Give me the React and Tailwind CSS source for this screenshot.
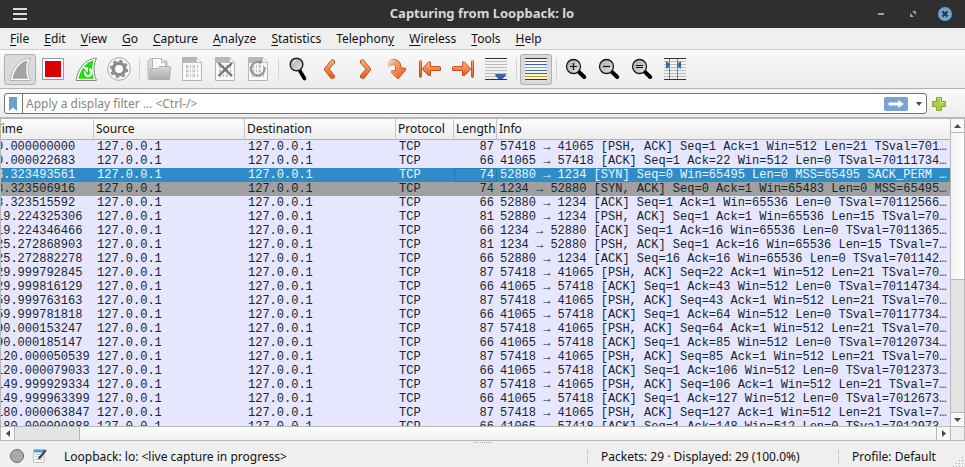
import React from "react";

const packets = [
  ["0.000000000", 87, "57418 → 41065 [PSH, ACK] Seq=1 Ack=1 Win=512 Len=21 TSval=701…"],
  ["0.000022683", 66, "41065 → 57418 [ACK] Seq=1 Ack=22 Win=512 Len=0 TSval=70111734…"],
  ["3.323493561", 74, "52880 → 1234 [SYN] Seq=0 Win=65495 Len=0 MSS=65495 SACK_PERM …", "selected"],
  ["3.323506916", 74, "1234 → 52880 [SYN, ACK] Seq=0 Ack=1 Win=65483 Len=0 MSS=65495…", "syn"],
  ["3.323515592", 66, "52880 → 1234 [ACK] Seq=1 Ack=1 Win=65536 Len=0 TSval=70112566…"],
  ["19.224325306", 81, "52880 → 1234 [PSH, ACK] Seq=1 Ack=1 Win=65536 Len=15 TSval=70…"],
  ["19.224346466", 66, "1234 → 52880 [ACK] Seq=1 Ack=16 Win=65536 Len=0 TSval=7011365…"],
  ["25.272868903", 81, "1234 → 52880 [PSH, ACK] Seq=1 Ack=16 Win=65536 Len=15 TSval=7…"],
  ["25.272882278", 66, "52880 → 1234 [ACK] Seq=16 Ack=16 Win=65536 Len=0 TSval=701142…"],
  ["29.999792845", 87, "57418 → 41065 [PSH, ACK] Seq=22 Ack=1 Win=512 Len=21 TSval=70…"],
  ["29.999816129", 66, "41065 → 57418 [ACK] Seq=1 Ack=43 Win=512 Len=0 TSval=70114734…"],
  ["59.999763163", 87, "57418 → 41065 [PSH, ACK] Seq=43 Ack=1 Win=512 Len=21 TSval=70…"],
  ["59.999781818", 66, "41065 → 57418 [ACK] Seq=1 Ack=64 Win=512 Len=0 TSval=70117734…"],
  ["90.000153247", 87, "57418 → 41065 [PSH, ACK] Seq=64 Ack=1 Win=512 Len=21 TSval=70…"],
  ["90.000185147", 66, "41065 → 57418 [ACK] Seq=1 Ack=85 Win=512 Len=0 TSval=70120734…"],
  ["120.000050539", 87, "57418 → 41065 [PSH, ACK] Seq=85 Ack=1 Win=512 Len=21 TSval=70…"],
  ["120.000079033", 66, "41065 → 57418 [ACK] Seq=1 Ack=106 Win=512 Len=0 TSval=7012373…"],
  ["149.999929334", 87, "57418 → 41065 [PSH, ACK] Seq=106 Ack=1 Win=512 Len=21 TSval=7…"],
  ["149.999963399", 66, "41065 → 57418 [ACK] Seq=1 Ack=127 Win=512 Len=0 TSval=7012673…"],
  ["180.000063847", 87, "57418 → 41065 [PSH, ACK] Seq=127 Ack=1 Win=512 Len=21 TSval=7…"],
  ["180.000090888", 66, "41065 → 57418 [ACK] Seq=1 Ack=148 Win=512 Len=0 TSval=7012973…"],
];

const rowTone = {
  selected: "bg-[#308cc6] text-[#eaf5fc]",
  syn: "bg-[#a0a0a0] text-[#12272e]",
  normal: "bg-[#e7e6ff] text-[#12272e]",
};

const menus = [
  ["", "F", "ile"], ["", "E", "dit"], ["", "V", "iew"], ["", "G", "o"], ["", "C", "apture"],
  ["", "A", "nalyze"], ["", "S", "tatistics"], ["Telephon", "y", ""], ["", "W", "ireless"],
  ["", "T", "ools"], ["", "H", "elp"],
];

const FIN = "M6 26.5C8 14.500 15 5 26.500 4C23 12 23.500 19 26.500 26.500Z";

function Fin({ color, edge }) {
  return (
    <>
      <path d={FIN} fill="#fff" stroke={edge} strokeWidth="1" />
      <path d="M8.300 24.700C10.500 15.500 16 8 23.700 6.200C21.500 13 22 19 23.900 24.700Z" fill={color} />
    </>
  );
}

function Page() {
  return (
    <>
      <path d="M6.500 3.500H20.500L25.500 8.500V26.500H6.500Z" fill="#fafafa" stroke="#b4b4b4" />
      <path d="M7 4H20V9H7Z" fill="#b8b8b8" />
      <path d="M20.500 3.500V8.500H25.500Z" fill="#fff" stroke="#bdbdbd" />
      {[12.5, 17, 21.5].map((y) => (
        <g key={y} stroke="#bcbcbc" fill="none">
          <rect x="10.500" y={y - 1} width="1.500" height="2" />
          <path d={`M14.500 ${y - 1.5}v3M21.500 ${y - 1.5}v3`} />
          <rect x="17" y={y - 1} width="1.500" height="2" />
        </g>
      ))}
    </>
  );
}

function Magnifier({ children }) {
  return (
    <>
      <path d="M19 18L24.200 23" stroke="#000" strokeWidth="4" strokeLinecap="round" />
      <circle cx="13.500" cy="12.500" r="7" fill="url(#lens)" stroke="#151515" strokeWidth="1.300" />
      <path d={children} stroke="#111" strokeWidth="1.200" fill="none" />
    </>
  );
}

function Lines({ colors }) {
  return colors.map((c, i) => (
    <path key={i} d={`M5 ${4.5 + i * 3}H27`} stroke={c} strokeWidth="1" />
  ));
}

const orange = { fill: "url(#orange)", stroke: "#c9501f", strokeWidth: 1, strokeLinejoin: "round" };
const G = "#babdb6";
const D = "#2e3436";

const tools = [
  ["Start capture", <Fin color="#a3a3a3" edge="#b4b4b4" />, true],
  ["Stop capture", (
    <>
      <rect x="5.500" y="4.500" width="21" height="21" fill="#fff" stroke="#9a9a9a" />
      <rect x="8" y="7" width="16" height="16" fill="#dc0000" />
    </>
  )],
  ["Restart capture", (
    <>
      <Fin color="#22de0c" edge="#858585" />
      <path d="M14.800 17C14.800 20.500 16 22 18 22C20 22 21.500 20.500 21.300 18.300C21.200 16.500 20.500 15.500 19.500 14.500" fill="none" stroke="#fff" strokeWidth="2" />
      <path d="M12.500 13H18V18.500Z" fill="#fff" />
    </>
  )],
  ["Capture options", (
    <>
      <circle cx="16" cy="15" r="11.300" fill="#fff" stroke="#a5a5a5" strokeWidth="1" />
      <circle cx="16" cy="15" r="8.300" fill="none" stroke="#8b8b8b" strokeWidth="2" strokeDasharray="3.300 3.218" />
      <circle cx="16" cy="15" r="5.800" fill="none" stroke="#8b8b8b" strokeWidth="3.600" />
    </>
  )],
  null,
  ["Open", (
    <>
      <path d="M5 25V7L7 5H13L14 7H24V25Z" fill="#d8d8d8" stroke="#b5b5b5" />
      <path d="M9.500 16V4.500H18.500L22.500 8.500V16Z" fill="#fafafa" stroke="#b5b5b5" />
      <path d="M18.500 4.500V8.500H22.500" fill="none" stroke="#b5b5b5" />
      <path d="M7.500 14.500H15L16.500 12.500H27.500L26.500 25.500H6.500Z" fill="url(#folder)" stroke="#adadad" strokeLinejoin="round" />
    </>
  )],
  ["Save", <Page />],
  ["Close", <><Page /><path d="M9.500 9L23 22M23 9L9.500 22" stroke="#737373" strokeWidth="2.400" /></>],
  ["Reload", (
    <>
      <Page />
      <path d="M18 8.300A6.800 6.800 0 1 0 22.300 13" fill="none" stroke="#969696" strokeWidth="2.300" />
      <path d="M17 5.500L21 7.500L17.500 11Z" fill="#969696" />
    </>
  )],
  null,
  ["Find", (
    <>
      <path d="M18 17L22.500 24.500" stroke="#000" strokeWidth="3.600" strokeLinecap="round" />
      <circle cx="14.500" cy="10.500" r="6.300" fill="url(#lens)" stroke="#222" strokeWidth="1.500" />
      <path d="M11 9.500a4 4 0 0 1 3-3" stroke="#fff" fill="none" />
    </>
  )],
  ["Previous packet", <path {...orange} d="M17 5.500L19.500 6.500V9L14 15L19.500 21.500V23.500L17.500 24.500H16L9.500 16V14.500Z" />],
  ["Next packet", <path {...orange} d="M15 5.500L12.500 6.500V9L18 15L12.500 21.500V23.500L14.500 24.500H16L22.500 16V14.500Z" />],
  ["Go to packet", (
    <>
      <path d="M6.500 11C6.500 7 9.500 5 13 5.500C18 6 20 9 20 14H24Q25.500 14.500 24.500 16L17.500 24.500H16.500L10 18.500Q9.500 16.500 11 16.500H14.500V14C14.500 11 13 10.500 11 11Q9 11.500 7.500 13Z" fill="url(#fade)" stroke="url(#fadeEdge)" strokeLinejoin="round" />
    </>
  )],
  ["First packet", (
    <>
      <rect {...orange} x="5.500" y="6.500" width="2" height="17" rx="1" />
      <path {...orange} d="M8.500 14.500L14.500 8H16.500V12.500H25.500Q26.500 12.500 26.500 13.500V16.500H16.500V21.500H14.500L8.500 15.500Z" />
    </>
  )],
  ["Last packet", (
    <>
      <rect {...orange} x="24.500" y="6.500" width="2" height="17" rx="1" />
      <path {...orange} d="M23.500 14.500L17.500 8H15.500V12.500H6.500Q5.500 12.500 5.500 13.500V16.500H15.500V21.500H17.500L23.500 15.500Z" />
    </>
  )],
  ["Auto scroll", (
    <>
      <Lines colors={[D, G, G, G, G, G, G, D]} />
      <path d="M15 20H26Q26 22 22.500 25H18.500Q15 22 15 20Z" fill="#3465a4" />
    </>
  )],
  null,
  ["Colorize", <><rect x="5" y="4" width="22" height="22" fill="#f7f7f7" /><Lines colors={[D, "#ef2929", "#3465a4", "#73d216", "#3465a4", "#75507b", "#c4a000", D]} /></>, true],
  null,
  ["Zoom in", <Magnifier>M10 12.500h7M13.500 9v7</Magnifier>],
  ["Zoom out", <Magnifier>M10 12.500h7</Magnifier>],
  ["Normal size", <Magnifier>M10 11.500h7M10 13.500h7</Magnifier>],
  ["Resize columns", (
    <>
      <Lines colors={[D, G, G, G, G, G, G, D]} />
      <path d="M10.500 5V25M18.500 5V25" stroke="#777a75" />
      <path d="M7 7.500H8L10.500 10V12L8 14.500H7ZM22 7.500H21L18.500 10V12L21 14.500H22Z" fill="#3465a4" />
    </>
  )],
];

function Toolbar() {
  return (
    <div role="toolbar" className="flex h-[39px] shrink-0 items-center gap-px border-b border-[#b2b2b2] bg-linear-to-b from-[#f9f9f9] to-[#ececec] px-1">
      {tools.map((tool, i) =>
        tool ? (
          <button
            key={i}
            aria-label={tool[0]}
            className={tool[2] ? "h-[31px] w-8 rounded-[3px] bg-[#dadada] outline -outline-offset-1 outline-[#b0b0b0]" : "h-[31px] w-8"}
          >
            <svg viewBox="0 0 32 31" className="block h-[31px] w-8">{tool[1]}</svg>
          </button>
        ) : (
          <div key={i} className="flex w-[6px] justify-center">
            <div className="h-5 w-px bg-[#d2d2d2]" />
          </div>
        )
      )}
    </div>
  );
}

function Gradients() {
  return (
    <svg className="absolute h-0 w-0" aria-hidden="true">
      <defs>
        <linearGradient id="orange" x1="0" y1="0" x2="0" y2="1">
          <stop offset="0" stopColor="#fbb878" />
          <stop offset="1" stopColor="#e95420" />
        </linearGradient>
        <linearGradient id="fade" x1="0" y1="0" x2="1" y2="1">
          <stop offset="0" stopColor="#f5b98a" stopOpacity="0.300" />
          <stop offset="0.300" stopColor="#f6a56a" />
          <stop offset="1" stopColor="#e95420" />
        </linearGradient>
        <linearGradient id="fadeEdge" x1="0" y1="0" x2="1" y2="0">
          <stop offset="0" stopColor="#c9501f" stopOpacity="0" />
          <stop offset="0.500" stopColor="#c9501f" />
        </linearGradient>
        <linearGradient id="folder" x1="0" y1="0" x2="0" y2="1">
          <stop offset="0" stopColor="#d9d9d9" />
          <stop offset="1" stopColor="#a9a9a9" />
        </linearGradient>
        <linearGradient id="lens" x1="0" y1="0" x2="1" y2="1">
          <stop offset="0" stopColor="#a8a8a8" />
          <stop offset="1" stopColor="#e4e4e4" />
        </linearGradient>
      </defs>
    </svg>
  );
}

function TitleBar() {
  return (
    <header className="flex h-7 shrink-0 items-center justify-between bg-[#2f2f2f] pr-1 pl-[13px]">
      <button aria-label="Window menu" className="flex w-[86px] flex-col gap-[3px]">
        <span className="h-[2px] w-[14px] bg-[#dcdcdc]" />
        <span className="h-[2px] w-[14px] bg-[#dcdcdc]" />
        <span className="h-[2px] w-[14px] bg-[#dcdcdc]" />
      </button>
      <h1 className="text-[13px] font-bold text-[#dad6d2]">Capturing from Loopback: lo</h1>
      <div className="flex items-center">
        <button aria-label="Minimize" className="flex w-8 justify-center">
          <svg className="block h-2 w-2"><path d="M1 3h6v2H1z" fill="#a0a0a0" /></svg>
        </button>
        <button aria-label="Restore" className="flex w-8 justify-center">
          <svg className="block h-2 w-2"><path d="M3 1h4v4zM1 3l4 4H1z" fill="#a0a0a0" /></svg>
        </button>
        <button aria-label="Close window" className="flex w-8 justify-center">
          <svg className="block h-[14px] w-[14px]">
            <circle cx="7" cy="7" r="7" fill="#66a8cf" />
            <path d="M4.500 4.500l5 5M9.500 4.500l-5 5" stroke="#2f2f2f" strokeWidth="2" />
          </svg>
        </button>
      </div>
    </header>
  );
}

function FilterBar() {
  return (
    <div className="flex h-7 shrink-0 items-center gap-[5px] bg-linear-to-b from-[#f9f9f9] to-[#ededed] pt-1 pr-[19px] pb-[3px] pl-1">
      <div className="flex h-[21px] min-w-0 flex-1 items-center rounded-[3px] border border-[#747474] bg-white">
        <button aria-label="Bookmarks" className="flex h-full w-[18px] items-center border-r border-[#747474] pl-1">
          <svg className="block h-[14px] w-2"><path d="M0 0h8v14l-4-3.500L0 14z" fill="#6f9ccf" /></svg>
        </button>
        <input
          aria-label="Display filter"
          placeholder="Apply a display filter … <Ctrl-/>"
          className="h-full min-w-0 flex-1 bg-transparent pl-[3px] text-[12px] outline-none placeholder:text-[#858585]"
        />
        <button aria-label="Apply filter" className="mr-2 flex h-[14px] w-6 items-center justify-center rounded-[2px] bg-[#7ba3d3]">
          <svg className="block h-2 w-4"><path d="M0.500 2.500h9.500V0l6 4l-6 4V5.500H0.500z" fill="#fff" /></svg>
        </button>
        <button aria-label="Recent filters" className="mr-1">
          <svg className="block h-1 w-[6px]"><path d="M0 0h6L3 4z" fill="#4a4a4a" /></svg>
        </button>
      </div>
      <button aria-label="Add filter button">
        <svg className="block h-[14px] w-[14px]">
          <path d="M4.500 0.500h5v4h4v5h-4v4h-5v-4h-4v-5h4z" fill="#a9cf45" stroke="#7da828" strokeLinejoin="round" />
          <path d="M5.500 1.500h3v4h4" fill="none" stroke="#d3e793" />
        </svg>
      </button>
    </div>
  );
}

function PacketTable() {
  const head = "border-r border-b border-r-[#c6c6c6] border-b-[#b1b1b1] pl-[2px] text-left align-middle font-normal";
  return (
    <table className="-ml-2 w-[calc(100%+8px)] table-fixed border-separate border-spacing-0 whitespace-nowrap">
      <colgroup>
        <col className="w-[101px]" />
        <col className="w-[151px]" />
        <col className="w-[151px]" />
        <col className="w-[58px]" />
        <col className="w-[43px]" />
        <col />
      </colgroup>
      <thead>
        <tr className="h-[21px] bg-linear-to-b from-[#fcfcfc] to-[#ececec] text-[12px] leading-5 text-[#111]">
          <th className={head}>Time</th>
          <th className={head}>Source</th>
          <th className={head}>Destination</th>
          <th className={head}>Protocol</th>
          <th className={head}>Length</th>
          <th className="border-b border-b-[#b1b1b1] pl-[2px] text-left align-middle font-normal">Info</th>
        </tr>
      </thead>
      <tbody className="font-['Liberation_Mono',monospace] text-[12px] leading-[14px]">
        {packets.map(([time, length, info, tone]) => (
          <tr key={time} className={rowTone[tone || "normal"]}>
            <td className="pl-[3px]">{time}</td>
            <td className="pl-[3px]">127.0.0.1</td>
            <td className="pl-[3px]">127.0.0.1</td>
            <td className="pl-[3px]">TCP</td>
            <td className={tone === "selected" ? "pr-[3px] text-right outline -outline-offset-1 outline-[#2a7cb0]" : "pr-[3px] text-right"}>{length}</td>
            <td className="overflow-hidden pl-[3px]">{info}</td>
          </tr>
        ))}
      </tbody>
    </table>
  );
}

function PacketPane() {
  return (
    <main className="flex min-h-0 flex-1 flex-col border-x border-t-2 border-b border-[#b8b8b8]">
      <div className="flex min-h-0 flex-1">
        <div className="min-w-0 flex-1 overflow-hidden bg-white"><PacketTable /></div>
        <div className="flex w-[14px] flex-col border-l border-[#b8b8b8] bg-[#e4e4e4]">
          <button aria-label="Scroll up" className="flex h-[14px] items-center justify-center border-b border-[#b8b8b8] bg-[#f8f8f8]">
            <svg className="block h-1 w-[7px]"><path d="M0 4h7L3.500 0z" fill="#4a4a4a" /></svg>
          </button>
          <div className="basis-[48%] border-b border-[#b8b8b8] bg-linear-to-r from-[#f3f3f3] to-[#fdfdfd]" />
          <div className="flex-1" />
          <button aria-label="Scroll down" className="flex h-[14px] items-center justify-center border-t border-[#b8b8b8] bg-[#f8f8f8]">
            <svg className="block h-1 w-[7px]"><path d="M0 0h7L3.500 4z" fill="#4a4a4a" /></svg>
          </button>
        </div>
      </div>
      <div className="flex h-[14px] shrink-0 border-t border-[#b8b8b8] bg-[#e4e4e4]">
        <button aria-label="Scroll left" className="flex w-[14px] items-center justify-center border-r border-[#b8b8b8] bg-[#f8f8f8]">
          <svg className="block h-[7px] w-1"><path d="M4 0v7L0 3.500z" fill="#4a4a4a" /></svg>
        </button>
        <div className="w-16" />
        <div className="flex-1 border-x border-[#b8b8b8] bg-linear-to-b from-[#fdfdfd] to-[#f1f1f1]" />
        <button aria-label="Scroll right" className="flex w-[14px] items-center justify-center border-r border-[#b8b8b8] bg-[#f8f8f8]">
          <svg className="block h-[7px] w-1"><path d="M0 0v7l4-3.500z" fill="#4a4a4a" /></svg>
        </button>
        <div className="w-[13px] bg-[#efefef]" />
      </div>
    </main>
  );
}

function StatusBar() {
  return (
    <footer className="shrink-0 bg-[#efefef] text-[12px] leading-[13px] text-[#111]">
      <div className="flex h-1 justify-center">
        <div className="mt-px w-[17px] border-t border-dotted border-[#a8a8a8]" />
      </div>
      <div className="flex h-[22px] items-center pr-[2px] pl-[10px]">
        <button aria-label="Expert information">
          <svg className="block h-[14px] w-[14px]"><circle cx="7" cy="7" r="6.500" fill="#a9aaa5" stroke="#686868" /></svg>
        </button>
        <button aria-label="Capture comments" className="ml-[9px]">
          <svg className="block h-[14px] w-[14px]">
            <path d="M0.500 1h10.500v12.500h-10.500z" fill="#fbfbfb" stroke="#c2c2c2" />
            <path d="M1 0.500h10v3H1z" fill="#4aa0da" />
            <path d="M2 5.500h7M2 8h6M2 10.500h7" stroke="#bcbcbc" />
            <path d="M12.800 1L7 8.500" stroke="#4c4c4c" strokeWidth="2.500" />
            <path d="M6.200 7L8.300 8.800L5 10.500z" fill="#222" />
          </svg>
        </button>
        <span className="ml-[17px] flex-1">Loopback: lo: &lt;live capture in progress&gt;</span>
        <span className="h-[13px] w-[251px] border-l border-dotted border-[#a8a8a8] pl-[13px]">Packets: 29 · Displayed: 29 (100.0%)</span>
        <span className="h-[13px] w-[115px] border-l border-dotted border-[#a8a8a8] pl-[13px]">Profile: Default</span>
        <svg className="block h-[10px] w-[10px] self-end">
          <path d="M9 0v1M6 3.500h1M9 3.500h1M3 6.500h1M6 6.500h1M9 6.500h1M0 9.500h1M3 9.500h1M6 9.500h1M9 9.500h1" stroke="#a8a8a8" />
        </svg>
      </div>
    </footer>
  );
}

export default function App() {
  return (
    <div className="flex h-screen flex-col overflow-hidden bg-[#efefef] font-['Noto_Sans',sans-serif]">
      <Gradients />
      <TitleBar />
      <nav className="flex h-[22px] shrink-0 items-center gap-[15px] border-b border-[#d0d0d0] bg-[#efefef] pl-[10px] text-[12px] text-[#111]">
        {menus.map(([before, key, after]) => (
          <button key={before + key}>
            {before}<span className="underline decoration-1 underline-offset-2">{key}</span>{after}
          </button>
        ))}
      </nav>
      <Toolbar />
      <FilterBar />
      <PacketPane />
      <StatusBar />
    </div>
  );
}
